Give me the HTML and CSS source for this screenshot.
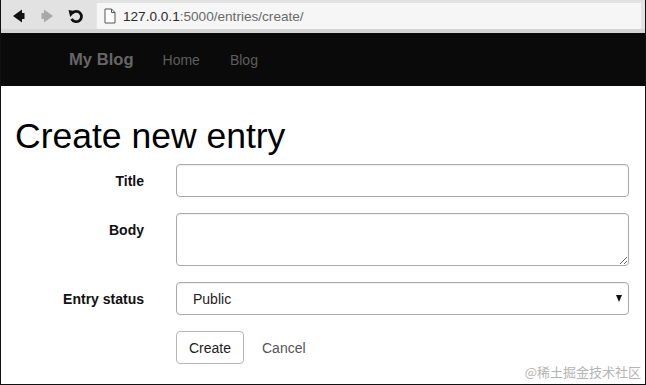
FILE: index.html
```html
<!DOCTYPE html>
<html>
<head>
<meta charset="utf-8">
<link rel="stylesheet" href="styles.css">
</head>
<body>
<div class="frame">
  <div class="toolbar">
    <div class="nav-buttons">
      <svg class="tb-icon" width="14" height="14" viewBox="0 0 14 14"><polygon points="1,7 10,0.5 10,13.5" fill="#111"/><rect x="10" y="4" width="2.5" height="6" fill="#111"/></svg>
      <svg class="tb-icon" width="14" height="14" viewBox="0 0 14 14"><polygon points="13,7 4,0.5 4,13.5" fill="#a8a8a8"/><rect x="1.5" y="4" width="2.5" height="6" fill="#a8a8a8"/></svg>
      <svg class="tb-icon" width="16" height="16" viewBox="0 0 16 16"><path d="M4.4 5 A5.2 5.2 0 1 1 3.6 10.8" fill="none" stroke="#111" stroke-width="2.8"/><polygon points="0.5,2 7.5,3.2 2.2,9" fill="#111"/></svg>
    </div>
    <div class="address">
      <svg class="page-icon" width="12" height="16" viewBox="0 0 12 16"><path d="M1 1 H7.5 L11 4.5 V15 H1 Z" fill="#fff" stroke="#555" stroke-width="1"/><path d="M7.5 1 V4.5 H11" fill="none" stroke="#555" stroke-width="1"/></svg>
      <span class="host">127.0.0.1</span><span class="path">:5000/entries/create/</span>
    </div>
  </div>
  <div class="navbar">
    <span class="brand">My Blog</span>
    <a class="nav-link">Home</a>
    <a class="nav-link">Blog</a>
  </div>
  <div class="page">
    <h1 class="title">Create new entry</h1>
    <form class="form">
      <label class="label center">Title</label>
      <input class="control" type="text">
      <label class="label top">Body</label>
      <textarea class="control area"></textarea>
      <label class="label center">Entry status</label>
      <div class="select-wrap">
        <select class="control select"><option>Public</option></select>
      </div>
      <div></div>
      <div class="actions">
        <button class="btn" type="button">Create</button>
        <a class="cancel">Cancel</a>
      </div>
    </form>
    <div class="watermark">@稀土掘金技术社区</div>
  </div>
</div>
</body>
</html>
```
FILE: styles.css
```css
html, body {
  margin: 0;
  padding: 0;
  background: #fff;
}
.frame {
  width: 646px;
  height: 385px;
  box-sizing: border-box;
  border-left: 1px solid #111;
  border-right: 1px solid #111;
  border-bottom: 1px solid #111;
  overflow: hidden;
  font-family: "Liberation Sans", Arial, sans-serif;
  display: flex;
  flex-direction: column;
}
.toolbar {
  height: 33px;
  box-sizing: border-box;
  background: #e2e2e2;
  border-bottom: 4px solid #d4d4d4;
  display: flex;
  align-items: stretch;
  padding-top: 3px;
}
.nav-buttons {
  width: 95px;
  display: flex;
  align-items: center;
  padding-left: 11px;
  gap: 14px;
  box-sizing: border-box;
}
.tb-icon { display: block; }
.address {
  flex: 1;
  background: #f6f6f6;
  border-left: 1px solid #e8e8e8;
  display: flex;
  align-items: center;
  padding-left: 7px;
  margin-right: 4px;
  font-size: 13.6px;
}
.page-icon { margin-right: 7px; }
.host { color: #2a2a2a; }
.path { color: #6a6a6a; }
.navbar {
  height: 53px;
  background: #0a0a0a;
  display: flex;
  align-items: center;
  padding-left: 68px;
  box-sizing: border-box;
}
.brand {
  color: #666;
  font-weight: bold;
  font-size: 16.6px;
  margin-right: 29px;
}
.nav-link {
  color: #5e5e5e;
  font-size: 14px;
  margin-right: 30px;
}
.page {
  flex: 1;
  position: relative;
}
.title {
  margin: 30px 0 8px 14px;
  font-size: 35.5px;
  line-height: 40px;
  font-weight: normal;
  color: #000;
}
.form {
  display: grid;
  grid-template-columns: 143px 453px;
  column-gap: 32px;
  row-gap: 16px;
  margin: 0;
}
.label {
  text-align: right;
  font-weight: bold;
  font-size: 14px;
  color: #111;
  line-height: 20px;
}
.label.center { align-self: center; }
.label.top { padding-top: 7px; }
.control {
  box-sizing: border-box;
  width: 453px;
  height: 33px;
  border: 1px solid #a9a9a9;
  border-radius: 4px;
  background: #fff;
  font-family: "Liberation Sans", Arial, sans-serif;
  font-size: 14px;
  margin: 0;
  box-shadow: inset 0 1px 1px rgba(0,0,0,0.06);
  display: block;
}
.area {
  height: 53px;
  resize: vertical;
}
.select-wrap {
  position: relative;
}
.select {
  appearance: none;
  -webkit-appearance: none;
  padding-left: 16px;
  color: #222;
}
.select-wrap::after {
  content: "";
  position: absolute;
  right: 7px;
  top: 13px;
  border-left: 3.5px solid transparent;
  border-right: 3.5px solid transparent;
  border-top: 7px solid #111;
}
.actions {
  display: flex;
  align-items: center;
}
.btn {
  width: 68px;
  height: 33px;
  border: 1px solid #b5b5b5;
  border-radius: 4px;
  background: #fff;
  font-family: "Liberation Sans", Arial, sans-serif;
  font-size: 14px;
  color: #222;
  padding: 0;
  margin-right: 18px;
}
.cancel {
  color: #555;
  font-size: 14px;
}
.watermark {
  position: absolute;
  right: 4px;
  bottom: 3px;
  font-family: "Noto Sans CJK SC", sans-serif;
  font-size: 13px;
  color: #b4b4b4;
}
```
